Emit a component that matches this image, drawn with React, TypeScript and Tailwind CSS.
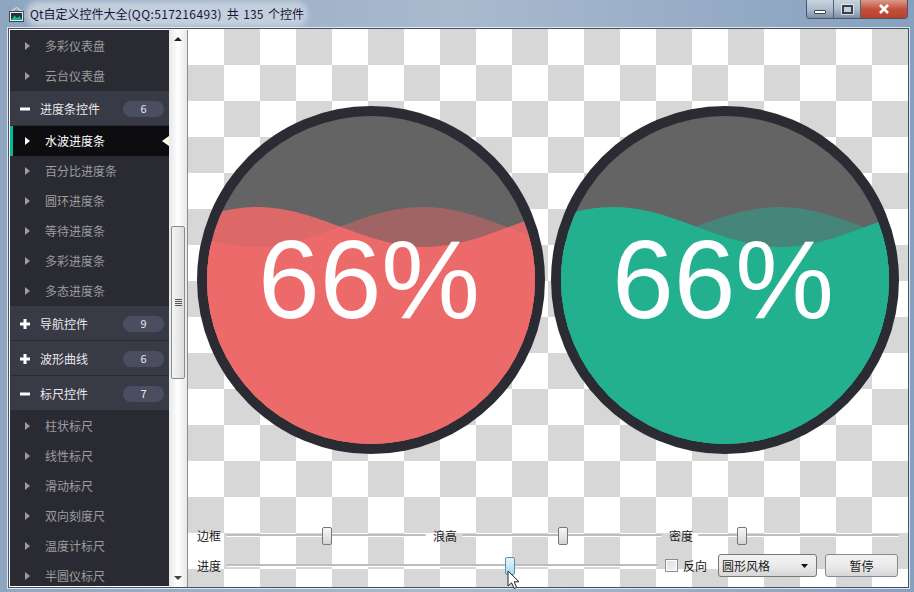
import { useId } from "react";

const FONT = "font-['Noto_Sans_CJK_SC','Liberation_Sans',sans-serif]";

type Row =
  | { kind: "item"; label: string; active?: boolean }
  | { kind: "group"; label: string; count: number; open: boolean };

const rows: Row[] = [
  { kind: "item", label: "多彩仪表盘" },
  { kind: "item", label: "云台仪表盘" },
  { kind: "group", label: "进度条控件", count: 6, open: true },
  { kind: "item", label: "水波进度条", active: true },
  { kind: "item", label: "百分比进度条" },
  { kind: "item", label: "圆环进度条" },
  { kind: "item", label: "等待进度条" },
  { kind: "item", label: "多彩进度条" },
  { kind: "item", label: "多态进度条" },
  { kind: "group", label: "导航控件", count: 9, open: false },
  { kind: "group", label: "波形曲线", count: 6, open: false },
  { kind: "group", label: "标尺控件", count: 7, open: true },
  { kind: "item", label: "柱状标尺" },
  { kind: "item", label: "线性标尺" },
  { kind: "item", label: "滑动标尺" },
  { kind: "item", label: "双向刻度尺" },
  { kind: "item", label: "温度计标尺" },
  { kind: "item", label: "半圆仪标尺" },
];

const SIZE = 348;

// sine wave closed along the bottom of the gauge
const wavePath = (crest: number) => {
  let d = "";
  for (let x = 0; x <= SIZE; x += 4) {
    const y = 121 - 20 * Math.cos((2 * Math.PI * (x - crest)) / 336);
    d += `${x === 0 ? "M" : "L"}${x} ${y.toFixed(2)} `;
  }
  return d + `L${SIZE} ${SIZE} L0 ${SIZE} Z`;
};

const Gauge = ({
  full,
  front,
  back,
  crest,
}: {
  full: string;
  front: string;
  back: string;
  crest: number;
}) => {
  const id = useId();
  return (
    <div className="relative h-[348px] w-[348px] shrink-0">
      <svg width={SIZE} height={SIZE} viewBox="0 0 348 348" className="block">
        <defs>
          <clipPath id={id + "c"}>
            <circle cx="174" cy="174" r="164" />
          </clipPath>
          <clipPath id={id + "b"}>
            <path d={wavePath(crest + 166)} />
          </clipPath>
        </defs>
        <circle cx="174" cy="174" r="174" fill="#2b2b33" />
        <g clipPath={`url(#${id}c)`}>
          <rect width="348" height="348" fill="#646464" />
          <path d={wavePath(crest + 166)} fill={back} />
          <path d={wavePath(crest)} fill={front} />
          <g clipPath={`url(#${id}b)`}>
            <path d={wavePath(crest)} fill={full} />
          </g>
        </g>
      </svg>
      <span className="absolute inset-0 flex items-center justify-center pr-[4px] font-['Liberation_Sans',sans-serif] text-[111px] leading-none text-white">
        66%
      </span>
    </div>
  );
};

const Slider = ({ width, at, active }: { width: number; at: number; active?: boolean }) => (
  <div className="relative h-[20px] shrink-0" style={{ width }}>
    <div className="absolute left-0 right-0 top-[8px] h-[3px] rounded-sm border-t-2 border-[#bdbdbd] bg-white" />
    <div
      className={
        "absolute top-[1px] h-[18px] w-[10px] rounded-[2px] border " +
        (active
          ? "border-[#5b8fb8] bg-gradient-to-b from-[#e6f4fb] to-[#a9d9f0]"
          : "border-[#777] bg-gradient-to-b from-[#f7f7f7] to-[#d4d4d4]")
      }
      style={{ left: at }}
    />
  </div>
);

const Label = ({ children }: { children: string }) => (
  <span className="w-[24px] shrink-0 text-[12px] leading-[20px] text-[#1a1a1a]">{children}</span>
);

const SideRow = ({ row }: { row: Row }) => {
  if (row.kind === "group") {
    return (
      <div className="flex h-[35px] items-center border-b border-[#2a2b32] bg-[#383a46] pl-[10px] pr-[5px] pt-[1px] text-[12px] text-[#e8e8e8] last:border-0">
        <svg width="10" height="10" viewBox="0 0 10 10" className="shrink-0">
          <rect x="0" y="3.5" width="10" height="3" fill="#fff" />
          {!row.open && <rect x="3.5" y="0" width="3" height="10" fill="#fff" />}
        </svg>
        <span className="ml-[10px] flex-1">{row.label}</span>
        <span className="flex h-[16px] w-[41px] items-center justify-center rounded-full bg-[#4a4e60] text-[11px] text-[#e8e8e8]">
          {row.count}
        </span>
      </div>
    );
  }
  return (
    <div
      className={
        "relative flex h-[30px] shrink-0 items-center pl-[15px] text-[12px] " +
        (row.active ? "border-l-[3px] border-[#00bb9e] !pl-[12px] bg-[#0d0d0f] text-white" : "text-[#9c9c9c]")
      }
    >
      <svg width="5" height="8" viewBox="0 0 5 8" className="shrink-0">
        <path d="M0 0L5 4L0 8Z" fill={row.active ? "#fff" : "#a09c94"} />
      </svg>
      <span className="ml-[15px]">{row.label}</span>
      {row.active && (
        <svg width="7" height="10" viewBox="0 0 7 10" className="absolute right-0 top-[10px]">
          <path d="M7 0L0 5L7 10Z" fill="#fff" />
          <path d="M7 2L4 5L7 8Z" fill="#fff8c8" />
        </svg>
      )}
    </div>
  );
};

const App = () => {
  return (
    <div className={"flex h-[592px] w-[914px] flex-col overflow-hidden bg-gradient-to-r from-[#8fa6c0] via-[#a9bace] to-[#86a0bf] " + FONT}>
      {/* title bar */}
      <div className="flex h-[28px] shrink-0 items-center justify-between pl-[9px] pr-[6px]">
        <div className="flex items-center">
          <svg width="15" height="15" viewBox="0 0 15 15">
            <path d="M7.5 0.5L14 5H1Z" fill="none" stroke="#e8eef2" strokeWidth="1" />
            <rect x="0.5" y="4.5" width="14" height="10" fill="#e8eef2" stroke="#3d4652" />
            <rect x="2" y="6" width="11" height="7" fill="#26343a" />
            <path d="M2 13L5.5 8.5L8 11L10.5 9L13 13Z" fill="#18b48f" />
          </svg>
          <span className="ml-[6px] rounded-full bg-[#c9d2de]/90 text-[12px] leading-[18px] text-[#12163a] shadow-[0_0_5px_4px_rgba(201,210,222,0.85)]">
            Qt自定义控件大全<span className="tracking-[0.38px]">(QQ:517216493)</span>
            <span className="[word-spacing:2px]"> 共 135 个控件</span>
          </span>
        </div>
        <div className="flex h-[19px] self-start overflow-hidden rounded-b-[4px] border border-t-0 border-[#4b5563]">
          <div className="flex w-[27px] items-end justify-center border-r border-[#56606e] bg-gradient-to-b from-[#c8d3df] via-[#aebdcd] to-[#7a8fa8] pb-[4px]">
            <div className="h-[4px] w-[12px] rounded-[1px] border border-[#3b4350] bg-white" />
          </div>
          <div className="flex w-[27px] items-center justify-center border-r border-[#56606e] bg-gradient-to-b from-[#c8d3df] via-[#aebdcd] to-[#7a8fa8]">
            <div className="h-[9px] w-[11px] border-2 border-[#39414d] bg-[#c5d0dc] outline outline-1 outline-white/60" />
          </div>
          <div className="flex w-[46px] items-center justify-center bg-gradient-to-b from-[#d99a8c] via-[#c4503c] to-[#b5402e]">
            <svg width="12" height="10" viewBox="0 0 12 10">
              <path d="M2 1L10 9M10 1L2 9" stroke="#fff" strokeWidth="2.6" />
            </svg>
          </div>
        </div>
      </div>

      {/* window content */}
      <div className="ml-[8px] flex h-[560px] w-[901px] shrink-0 border border-[#47505f] bg-white ring-1 ring-white/70">
        <div className="flex w-[179px] shrink-0 flex-col pl-[1px] pt-[1px]">
          <div className="flex min-h-0 flex-1">
            <div className="h-[556px] w-[159px] shrink-0 overflow-hidden bg-[#2a2b32]">
              <div className="mt-[1px] flex flex-col">
                {rows.map((row) => (
                  <SideRow key={row.label} row={row} />
                ))}
              </div>
            </div>
            {/* scrollbar */}
            <div className="flex w-[19px] shrink-0 flex-col items-center border-r border-[#8b8b8b] bg-gradient-to-r from-[#e7e8e7] via-white to-[#e7e8e7]">
              <svg width="8" height="4" viewBox="0 0 8 4" className="mt-[7px] shrink-0">
                <path d="M4 0L8 4H0Z" fill="#222" />
              </svg>
              <div className="mt-[185px] flex h-[153px] w-[14px] shrink-0 items-center justify-center rounded-[2px] border border-[#8a8a8a] bg-gradient-to-r from-[#f5f5f5] to-[#dcdcdc]">
                <div className="h-[7px] w-[7px] border-y-[3px] border-double border-[#555]" />
              </div>
              <div className="flex-1" />
              <svg width="8" height="4" viewBox="0 0 8 4" className="mb-[7px] shrink-0">
                <path d="M0 0H8L4 4Z" fill="#444" />
              </svg>
            </div>
          </div>
        </div>

        {/* gauges and controls */}
        <div className="flex min-w-0 flex-1 flex-col justify-between bg-[repeating-conic-gradient(#d7d7d7_0_25%,#fff_0_50%)] bg-[length:72px_72px] pb-[10px] pl-[9px] pr-[9px] pt-[77px]">
          <div className="flex gap-[6px]">
            <Gauge full="#ec6a6a" front="#dc6868" back="#a06464" crest={60} />
            <Gauge full="#22b08f" front="#22b08f" back="#46857a" crest={62} />
          </div>

          <div className="relative flex flex-col gap-[8px]">
            <div className="flex items-center">
              <Label>边框</Label>
              <div className="w-[5px]" />
              <Slider width={200} at={96} />
              <div className="w-[7px]" />
              <Label>浪高</Label>
              <div className="w-[5px]" />
              <Slider width={200} at={96} />
              <div className="w-[7px]" />
              <Label>密度</Label>
              <div className="w-[5px]" />
              <Slider width={201} at={39} />
            </div>
            <div className="flex items-center">
              <Label>进度</Label>
              <div className="w-[5px]" />
              <Slider width={432} at={279} active />
              <div className="ml-[7px] h-[13px] w-[13px] shrink-0 border border-[#8e8e8e] bg-gradient-to-br from-[#dcdcdc] to-[#f6f6f6] outline outline-1 -outline-offset-2 outline-white" />
              <span className="ml-[5px] w-[24px] shrink-0 text-[12px] text-[#1a1a1a]">反向</span>
              <div className="ml-[11px] flex h-[23px] w-[99px] shrink-0 items-center justify-between rounded-[3px] border border-[#777] bg-gradient-to-b from-[#f2f2f2] via-[#ebebeb] to-[#d6d6d6] pl-[3px] pr-[8px] text-[12px] text-[#1a1a1a]">
                <span>圆形风格</span>
                <svg width="7" height="4" viewBox="0 0 7 4">
                  <path d="M0 0H7L3.5 4Z" fill="#111" />
                </svg>
              </div>
              <div className="ml-[8px] flex h-[23px] w-[73px] shrink-0 items-center justify-center rounded-[3px] border border-[#8a8a8a] bg-gradient-to-b from-[#f2f2f2] via-[#ebebeb] to-[#d6d6d6] text-[12px] text-[#1a1a1a]">
                暂停
              </div>
            </div>
            {/* mouse pointer */}
            <svg width="13" height="20" viewBox="0 0 13 20" className="absolute left-[310px] top-[44px]">
              <path d="M1 1V16L4.6 12.8L7 18.5L9.6 17.4L7.2 11.8H12Z" fill="#fff" stroke="#222" strokeWidth="1" />
            </svg>
          </div>
        </div>
      </div>
    </div>
  );
};

export default App;
